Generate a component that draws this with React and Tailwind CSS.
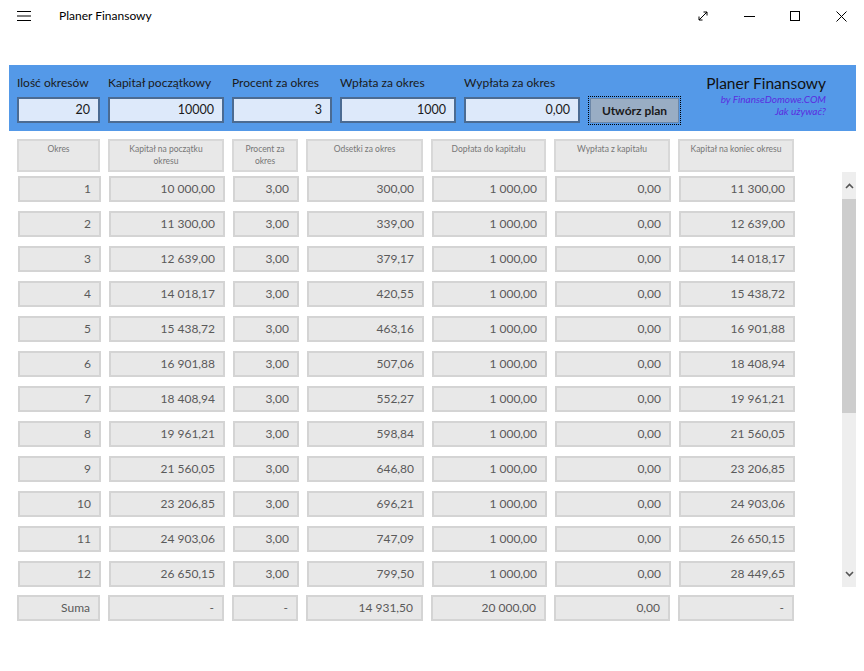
const font = { fontFamily: 'Lato, "Noto Sans", Arial, sans-serif' };

const rows = [
  ['1', '10 000,00', '3,00', '300,00', '1 000,00', '0,00', '11 300,00'],
  ['2', '11 300,00', '3,00', '339,00', '1 000,00', '0,00', '12 639,00'],
  ['3', '12 639,00', '3,00', '379,17', '1 000,00', '0,00', '14 018,17'],
  ['4', '14 018,17', '3,00', '420,55', '1 000,00', '0,00', '15 438,72'],
  ['5', '15 438,72', '3,00', '463,16', '1 000,00', '0,00', '16 901,88'],
  ['6', '16 901,88', '3,00', '507,06', '1 000,00', '0,00', '18 408,94'],
  ['7', '18 408,94', '3,00', '552,27', '1 000,00', '0,00', '19 961,21'],
  ['8', '19 961,21', '3,00', '598,84', '1 000,00', '0,00', '21 560,05'],
  ['9', '21 560,05', '3,00', '646,80', '1 000,00', '0,00', '23 206,85'],
  ['10', '23 206,85', '3,00', '696,21', '1 000,00', '0,00', '24 903,06'],
  ['11', '24 903,06', '3,00', '747,09', '1 000,00', '0,00', '26 650,15'],
  ['12', '26 650,15', '3,00', '799,50', '1 000,00', '0,00', '28 449,65'],
];

const sum = ['Suma', '-', '-', '14 931,50', '20 000,00', '0,00', '-'];

const headers = [
  'Okres',
  'Kapitał na początku okresu',
  'Procent za okres',
  'Odsetki za okres',
  'Dopłata do kapitału',
  'Wypłata z kapitału',
  'Kapitał na koniec okresu',
];

const grid = 'grid grid-cols-[83px_116px_66px_117px_115px_116px_116px] gap-x-[8px]';

function Field({ label, value, width }) {
  return (
    <div className={`flex flex-col ${width}`}>
      <span className="h-[23px] text-[12px] leading-[17px] text-[#1a1a1a] whitespace-nowrap">{label}</span>
      <div className="h-[26px] border-2 border-[#4b6b92] bg-[#dde9fa] px-2 text-right text-[12.5px] leading-[22px] text-[#1a1a1a]">
        {value}
      </div>
    </div>
  );
}

function Cell({ children }) {
  return (
    <div className="h-[26px] border-2 border-[#d4d4d4] bg-[#e8e8e8] pr-[8px] text-right text-[12px] leading-[22px] text-[#5a5a5a]">
      {children}
    </div>
  );
}

export default function App() {
  return (
    <div style={font} className="relative flex h-[671px] w-[864px] flex-col overflow-hidden bg-white">
      {/* title bar */}
      <div className="flex h-[32px] items-center">
        <svg className="ml-[17px]" width="14" height="12" viewBox="0 0 14 12" stroke="#000" strokeWidth="1">
          <path d="M0 1.5h14M0 6h14M0 10.5h14" />
        </svg>
        <span className="ml-[28px] text-[12px] text-black">Planer Finansowy</span>
        <div className="ml-auto flex h-full items-center">
          <div className="flex h-full w-[46px] items-center justify-center">
            <svg width="10" height="10" viewBox="0 0 10 10" fill="none" stroke="#000" strokeWidth="1">
              <path d="M1 9L9 1M5.5 1H9v3.5M1 5.5V9h3.5" />
            </svg>
          </div>
          <div className="flex h-full w-[46px] items-center justify-center">
            <svg width="11" height="10" viewBox="0 0 11 10" stroke="#000" strokeWidth="1">
              <path d="M0 5.5h11" />
            </svg>
          </div>
          <div className="flex h-full w-[46px] items-center justify-center">
            <svg width="10" height="10" viewBox="0 0 10 10" fill="none" stroke="#000" strokeWidth="1">
              <rect x="0.5" y="0.5" width="9" height="9" />
            </svg>
          </div>
          <div className="flex h-full w-[46px] items-center justify-center">
            <svg width="11" height="11" viewBox="0 0 11 11" stroke="#000" strokeWidth="1">
              <path d="M0.5 0.5l10 10M10.5 0.5l-10 10" />
            </svg>
          </div>
        </div>
      </div>

      {/* input panel */}
      <div className="mx-[9px] mt-[33px] flex h-[66px] w-[847px] items-start bg-[#5499e8] pl-[8px] pr-[30px] pt-[9px]">
        <div className="flex items-end gap-x-[8px]">
          <Field label="Ilość okresów" value="20" width="w-[83px]" />
          <Field label="Kapitał początkowy" value="10000" width="w-[116px]" />
          <Field label="Procent za okres" value="3" width="w-[100px]" />
          <Field label="Wpłata za okres" value="1000" width="w-[116px]" />
          <Field label="Wypłata za okres" value="0,00" width="w-[116px]" />
          <div className="mb-[-2px] h-[29px] w-[93px] border border-dotted border-black p-[1px]">
            <div className="flex h-full items-center justify-center border border-[#6c87a8] bg-[#99adc4] text-[12px] font-bold text-[#1a1a1a]">
              Utwórz plan
            </div>
          </div>
        </div>
        <div className="ml-auto flex flex-col items-end">
          <span className="text-[15.5px] leading-[19px] text-[#111]">Planer Finansowy</span>
          <span className="text-[10px] italic leading-[12px] text-[#5b2de0]">by FinanseDomowe.COM</span>
          <span className="text-[10px] italic leading-[12px] text-[#5b2de0]">Jak używać?</span>
        </div>
      </div>

      {/* table */}
      <div className="ml-[17px] mt-[8px] flex w-[839px]">
        <div className="flex flex-col">
          <div className={grid}>
            {headers.map((h) => (
              <div
                key={h}
                className="h-[33px] border-2 border-[#d8d8d8] bg-[#e8e8e8] px-[6px] pt-[2px] text-center text-[8.5px] leading-[12px] text-[#777]"
              >
                {h}
              </div>
            ))}
          </div>
          <div className="mt-[4px] flex flex-col gap-y-[9px] pl-[1px]">
            {rows.map((r) => (
              <div key={r[0]} className={grid}>
                {r.map((v, i) => (
                  <Cell key={i}>{v}</Cell>
                ))}
              </div>
            ))}
          </div>
          <div className={`mt-[8px] ${grid}`}>
            {sum.map((v, i) => (
              <Cell key={i}>{v}</Cell>
            ))}
          </div>
        </div>

        {/* scrollbar */}
        <div className="ml-auto mt-[33px] flex h-[415px] w-[14px] flex-col bg-[#eeeeee]">
          <div className="flex h-[27px] items-center justify-center">
            <svg width="9" height="6" viewBox="0 0 9 6" fill="none" stroke="#555" strokeWidth="1.6">
              <path d="M1 5l3.5-3.5L8 5" />
            </svg>
          </div>
          <div className="h-[214px] bg-[#cdcdcd]" />
          <div className="flex-1" />
          <div className="flex h-[26px] items-center justify-center">
            <svg width="9" height="6" viewBox="0 0 9 6" fill="none" stroke="#555" strokeWidth="1.6">
              <path d="M1 1l3.5 3.5L8 1" />
            </svg>
          </div>
        </div>
      </div>
    </div>
  );
}
